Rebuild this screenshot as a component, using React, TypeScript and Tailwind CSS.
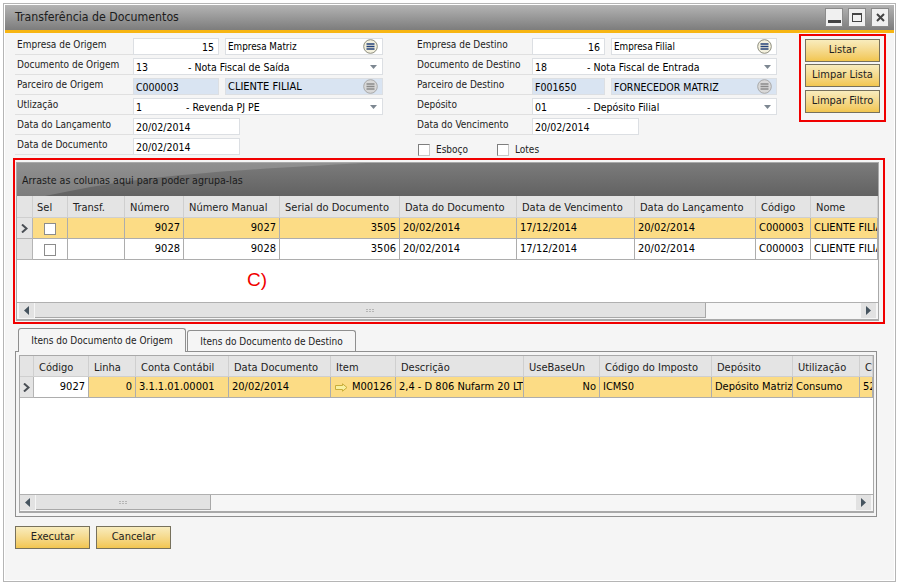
const FONT = "font-['DejaVu_Sans_Condensed','DejaVu_Sans',sans-serif]";

type Cell = { text: string; right?: boolean };

const TOP_COLS = [
  { label: "Sel", width: 35 },
  { label: "Transf.", width: 57 },
  { label: "Número", width: 59 },
  { label: "Número Manual", width: 96 },
  { label: "Serial do Documento", width: 120 },
  { label: "Data do Documento", width: 117 },
  { label: "Data de Vencimento", width: 118 },
  { label: "Data do Lançamento", width: 121 },
  { label: "Código", width: 55 },
  { label: "Nome", width: 67 },
];

const TOP_ROWS: Cell[][] = [
  [
    { text: "" },
    { text: "" },
    { text: "9027", right: true },
    { text: "9027", right: true },
    { text: "3505", right: true },
    { text: "20/02/2014" },
    { text: "17/12/2014" },
    { text: "20/02/2014" },
    { text: "C000003" },
    { text: "CLIENTE FILIAL" },
  ],
  [
    { text: "" },
    { text: "" },
    { text: "9028", right: true },
    { text: "9028", right: true },
    { text: "3506", right: true },
    { text: "20/02/2014" },
    { text: "17/12/2014" },
    { text: "20/02/2014" },
    { text: "C000003" },
    { text: "CLIENTE FILIAL" },
  ],
];

const ITEM_COLS = [
  { label: "Código", width: 55 },
  { label: "Linha", width: 47 },
  { label: "Conta Contábil", width: 93 },
  { label: "Data Documento", width: 102 },
  { label: "Item", width: 65 },
  { label: "Descrição", width: 128 },
  { label: "UseBaseUn", width: 76 },
  { label: "Código do Imposto", width: 112 },
  { label: "Depósito", width: 81 },
  { label: "Utilização", width: 67 },
  { label: "C", width: 13 },
];

const ITEM_ROW: Cell[] = [
  { text: "9027", right: true },
  { text: "0", right: true },
  { text: "3.1.1.01.00001" },
  { text: "20/02/2014" },
  { text: "M00126", right: true },
  { text: "2,4 - D 806 Nufarm 20 LT" },
  { text: "No", right: true },
  { text: "ICMS0" },
  { text: "Depósito Matriz" },
  { text: "Consumo" },
  { text: "5202" },
];

function MenuIcon({ disabled }: { disabled?: boolean }) {
  const line = disabled ? "#8a8a8a" : "#24427a";
  return (
    <svg width="15" height="15" viewBox="0 0 15 15" className="shrink-0">
      <circle cx="7.5" cy="7.5" r="6.8" fill={disabled ? "#d8d8d8" : "#f4f1de"} stroke={disabled ? "#a8a8a8" : "#8b8b7c"} />
      <path d="M3.5 5h8M3.5 7.5h8M3.5 10h8" stroke={line} strokeWidth="1.3" />
    </svg>
  );
}

function Caret() {
  return (
    <svg width="7" height="4" viewBox="0 0 7 4" className="shrink-0">
      <path d="M0 0h7L3.5 4z" fill="#7d8791" />
    </svg>
  );
}

function Label({ children, width = 118 }: { children: string; width?: number }) {
  return (
    <div
      style={{ width }}
      className="h-[17px] shrink-0 border-b border-[#e0e0e0] pl-[2px] text-[10px] leading-[13px] whitespace-nowrap text-[#222]"
    >
      {children}
    </div>
  );
}

function Field({
  width,
  value,
  right,
  blue,
  icon,
  gap,
  size = 10.5,
}: {
  width: number;
  value: string;
  right?: boolean;
  blue?: boolean;
  icon?: "menu" | "menu-off";
  gap?: boolean;
  size?: number;
}) {
  return (
    <div
      style={{ width }}
      className={`h-[17px] shrink-0 flex items-center border border-[#dcdfe3] pl-[2px] pr-[4px] ${gap ? "ml-[6px]" : ""} ${
        blue ? "bg-[#d9e4f2]" : "bg-white"
      } ${right ? "justify-end" : "justify-between"}`}
    >
      <span style={{ fontSize: size }} className="pt-[2px] whitespace-nowrap text-black">
        {value}
      </span>
      {icon && <MenuIcon disabled={icon === "menu-off"} />}
    </div>
  );
}

function SelectField({ width, code, text, indent }: { width: number; code: string; text: string; indent: number }) {
  return (
    <div
      style={{ width }}
      className="h-[17px] shrink-0 flex items-center border border-[#dcdfe3] bg-white pl-[2px] pr-[5px] text-[10.5px]"
    >
      <span style={{ width: indent }} className="shrink-0 pt-[2px] text-black">
        {code}
      </span>
      <span className="flex-1 pt-[2px] whitespace-nowrap text-black">{text}</span>
      <Caret />
    </div>
  );
}

function Row({ children }: { children: React.ReactNode }) {
  return <div className="flex h-[20px]">{children}</div>;
}

function GoldButton({ children, className = "" }: { children: string; className?: string }) {
  return (
    <button
      className={`w-[75px] h-[23px] shrink-0 border border-[#77715c] bg-gradient-to-b from-[#f8ecbd] to-[#f2c64f] text-[11px] text-[#222] ${className}`}
    >
      {children}
    </button>
  );
}

function FormCheck() {
  return <div className="w-[12px] h-[12px] shrink-0 bg-white border border-[#7e7e7e] border-r-[#c8c8c8] border-b-[#c8c8c8]" />;
}

function GridCheck() {
  return <div className="w-[12px] h-[12px] shrink-0 bg-white border border-[#8c8c8c]" />;
}

function HeaderCell({ label, width, indent = 5 }: { label: string; width: number; indent?: number }) {
  return (
    <div
      style={{ width, paddingLeft: indent }}
      className="shrink-0 h-full flex items-center pt-[4px] bg-[#e4e4e4] border-r border-b border-[#cfcfcf] overflow-hidden whitespace-nowrap text-[#222]"
    >
      {label}
    </div>
  );
}

function RowHead({ active, width }: { active?: boolean; width: number }) {
  return (
    <div
      style={{ width }}
      className="shrink-0 h-full flex items-center justify-center bg-[#e4e4e4] border-r border-b border-[#b5b5b5]"
    >
      {active && (
        <svg width="7" height="9" viewBox="0 0 7 9">
          <path d="M1 0.5 5.5 4.5 1 8.5" fill="none" stroke="#4a4f55" strokeWidth="2" />
        </svg>
      )}
    </div>
  );
}

function ScrollBar({ thumb, track, start }: { thumb: number; track: number; start: number }) {
  return (
    <div
      style={{ width: track, paddingLeft: start }}
      className="flex h-[17px] shrink-0 bg-[#f6f6f6] border-t border-[#b0b0b0] pb-[1px]"
    >
      <div className="w-[15px] h-[15px] shrink-0 flex items-center justify-center bg-[#e2e2e2]">
        <svg width="5" height="9" viewBox="0 0 5 9">
          <path d="M5 0v9L0 4.5z" fill="#46545f" />
        </svg>
      </div>
      <div
        style={{ width: thumb }}
        className="ml-[1px] h-full shrink-0 flex items-center justify-center bg-[#e2e2e2] border-r border-b border-[#a8a8a8]"
      >
        <div className="grid grid-cols-3 gap-[1px]">
          {[0, 1, 2, 3, 4, 5].map((i) => (
            <div key={i} className="w-[2px] h-[1px] bg-[#b5b5b5]" />
          ))}
        </div>
      </div>
      <div className="flex-1" />
      <div className="w-[15px] h-[15px] mr-[2px] shrink-0 flex items-center justify-center bg-[#e2e2e2]">
        <svg width="5" height="9" viewBox="0 0 5 9">
          <path d="M0 0v9L5 4.5z" fill="#46545f" />
        </svg>
      </div>
    </div>
  );
}

function TopGrid() {
  return (
    <div className="flex flex-col h-[159px] w-[863px] bg-white border border-b-2 border-[#a9a9a9] overflow-hidden">
      <div className="relative h-[33px] shrink-0 overflow-hidden bg-gradient-to-b from-[#7b7b7b] to-[#626262] flex items-center pl-[5px] pt-[2px] text-[10.6px] text-[#1b1b1b]">
        <svg className="absolute inset-0" width="861" height="33" viewBox="0 0 861 33">
          <path d="M0 0H349C216 7 133 12 53 28L28 33H0z" fill="#ffffff" fillOpacity="0.17" />
        </svg>
        <span className="relative whitespace-nowrap">Arraste as colunas aqui para poder agrupa-las</span>
      </div>
      <div className="flex h-[22px] shrink-0">
        <HeaderCell label="" width={16} />
        {TOP_COLS.map((c, i) => (
          <HeaderCell key={c.label} label={c.label} width={c.width} indent={i === 0 ? 4 : 5} />
        ))}
      </div>
      {TOP_ROWS.map((row, r) => (
        <div key={r} className="flex h-[21px] shrink-0">
          <RowHead active={r === 0} width={16} />
          {row.map((cell, i) => (
            <div
              key={i}
              style={{ width: TOP_COLS[i].width }}
              className={`shrink-0 h-full flex items-center pt-[1px] overflow-hidden whitespace-nowrap border-r border-b border-[#adadad] text-black px-[3px] ${
                r === 0 ? "bg-[#fcdc85]" : "bg-white"
              } ${cell.right ? "justify-end" : ""} ${i === 0 ? "justify-center" : ""}`}
            >
              {i === 0 ? <GridCheck /> : cell.text}
            </div>
          ))}
        </div>
      ))}
      <div className="flex-1" />
      <ScrollBar thumb={671} track={861} start={2} />
    </div>
  );
}

function ItemsGrid() {
  return (
    <div className="flex flex-col h-[158px] w-[855px] bg-white border border-b-2 border-[#a9a9a9] overflow-hidden">
      <div className="flex h-[21px] shrink-0">
        <HeaderCell label="" width={14} />
        {ITEM_COLS.map((c) => (
          <HeaderCell key={c.label} label={c.label} width={c.width} />
        ))}
      </div>
      <div className="flex h-[21px] shrink-0">
        <RowHead active width={14} />
        {ITEM_ROW.map((cell, i) => (
          <div
            key={i}
            style={{ width: ITEM_COLS[i].width }}
            className={`shrink-0 h-full flex items-center overflow-hidden whitespace-nowrap border-r border-b border-[#adadad] text-black px-[3px] ${
              i === 0 ? "bg-white" : "bg-[#fcdc85]"
            } ${cell.right ? "justify-end" : ""}`}
          >
            {i === 4 && (
              <svg width="13" height="9" viewBox="0 0 13 9" className="mr-[4px] shrink-0">
                <path d="M0.5 2.5H7.5V0.8L12 4.5 7.5 8.2V6.5H0.5z" fill="#f8f0a0" stroke="#c8ad3a" />
              </svg>
            )}
            {cell.text}
          </div>
        ))}
      </div>
      <div className="flex-1" />
      <ScrollBar thumb={175} track={853} start={0} />
    </div>
  );
}

export default function App() {
  return (
    <div className={`w-[898px] h-[584px] bg-white p-[3px] text-[11px] ${FONT}`}>
      <div className="w-[893px] h-[579px] border border-[#b5b5b5] bg-white p-[1px]">
        <div className="flex flex-col h-full bg-[#f5f5f5]">
          {/* title */}
          <div className="flex items-center justify-between h-[25px] shrink-0 bg-gradient-to-b from-[#b4b4b4] to-[#7d7d7d] pl-[10px] pr-[5px] border-b-[3px] border-[#f7b512] box-content">
            <span className="text-[12.25px] text-[#1c1c1c]">Transferência de Documentos</span>
            <div className="flex gap-[5px]">
              <div className="w-[18px] h-[19px] flex items-end justify-center bg-[#f0f0f0] border border-[#8b8b8b] pb-[3px]">
                <div className="w-[13px] h-[3px] bg-[#444]" />
              </div>
              <div className="w-[18px] h-[19px] flex items-center justify-center bg-[#f0f0f0] border border-[#8b8b8b]">
                <div className="w-[10px] h-[9px] border border-t-2 border-[#444]" />
              </div>
              <div className="w-[18px] h-[19px] flex items-center justify-center bg-[#f0f0f0] border border-[#8b8b8b]">
                <svg width="9" height="9" viewBox="0 0 9 9">
                  <path d="M1 1l7 7M8 1L1 8" stroke="#444" strokeWidth="2" />
                </svg>
              </div>
            </div>
          </div>

          {/* form */}
          <div className="flex h-[125px] shrink-0 pl-[10px]">
            <div className="w-[369px] pt-[5px] shrink-0">
              <Row>
                <Label>Empresa de Origem</Label>
                <Field width={86} value="15" right />
                <Field width={158} value="Empresa Matriz" icon="menu" gap size={9.8} />
              </Row>
              <Row>
                <Label>Documento de Origem</Label>
                <SelectField width={250} code="13" text="- Nota Fiscal de Saída" indent={52} />
              </Row>
              <Row>
                <Label>Parceiro de Origem</Label>
                <Field width={86} value="C000003" blue />
                <Field width={158} value="CLIENTE FILIAL" blue icon="menu-off" gap size={11} />
              </Row>
              <Row>
                <Label>Utlização</Label>
                <SelectField width={250} code="1" text="- Revenda PJ PE" indent={50} />
              </Row>
              <Row>
                <Label>Data do Lançamento</Label>
                <Field width={107} value="20/02/2014" />
              </Row>
              <Row>
                <Label>Data de Documento</Label>
                <Field width={107} value="20/02/2014" />
              </Row>
            </div>
            <div className="w-[396px] pl-[31px] pt-[5px] shrink-0">
              <Row>
                <Label width={117}>Empresa de Destino</Label>
                <Field width={73} value="16" right />
                <Field width={166} value="Empresa Filial" icon="menu" gap size={9.8} />
              </Row>
              <Row>
                <Label width={117}>Documento de Destino</Label>
                <SelectField width={245} code="18" text="- Nota Fiscal de Entrada" indent={52} />
              </Row>
              <Row>
                <Label width={117}>Parceiro de Destino</Label>
                <Field width={73} value="F001650" blue />
                <Field width={166} value="FORNECEDOR MATRIZ" blue icon="menu-off" gap />
              </Row>
              <Row>
                <Label width={117}>Depósito</Label>
                <SelectField width={245} code="01" text="- Depósito Filial" indent={52} />
              </Row>
              <Row>
                <Label width={117}>Data do Vencimento</Label>
                <Field width={107} value="20/02/2014" />
              </Row>
              <div className="flex items-center h-[20px] pl-[3px] pt-[3px] text-[10px] text-[#222]">
                <FormCheck />
                <span className="ml-[6px] w-[61px]">Esboço</span>
                <FormCheck />
                <span className="ml-[6px]">Lotes</span>
              </div>
            </div>
            <div className="flex flex-col w-[87px] h-[88px] mt-[1px] ml-[19px] shrink-0 border-2 border-[#f00000] items-center pt-[3px]">
              <GoldButton>Listar</GoldButton>
              <GoldButton className="mt-[2px]">Limpar Lista</GoldButton>
              <GoldButton className="mt-[3px]">Limpar Filtro</GoldButton>
            </div>
          </div>

          {/* top grid with annotation */}
          <div className="relative w-[872px] h-[166px] shrink-0 ml-[8px] border-2 border-[#f00000] pl-[1px] pt-[2px]">
            <TopGrid />
            <span className="absolute left-[232px] top-[110px] text-[19px] leading-none text-[#f00000] font-['Liberation_Sans',sans-serif]">
              C)
            </span>
          </div>

          {/* tabs */}
          <div className="flex items-end h-[27px] shrink-0 pl-[13px] text-[10px] whitespace-nowrap text-[#222]">
            <div className="h-[24px] w-[168px] flex items-center justify-center bg-[#f5f5f5] border border-b-0 border-[#8f8f8f] rounded-t-[3px] relative top-[1px]">
              Itens do Documento de Origem
            </div>
            <div className="h-[21px] w-[169px] flex items-center justify-center bg-[#f5f5f5] border border-b-0 border-[#8f8f8f] rounded-t-[3px] ml-[1px]">
              Itens do Documento de Destino
            </div>
          </div>
          <div className="w-[862px] h-[166px] shrink-0 ml-[10px] border border-[#8f8f8f] p-[3px]">
            <ItemsGrid />
          </div>

          {/* actions */}
          <div className="flex gap-[6px] pl-[10px] pt-[9px]">
            <GoldButton>Executar</GoldButton>
            <GoldButton>Cancelar</GoldButton>
          </div>
        </div>
      </div>
    </div>
  );
}
